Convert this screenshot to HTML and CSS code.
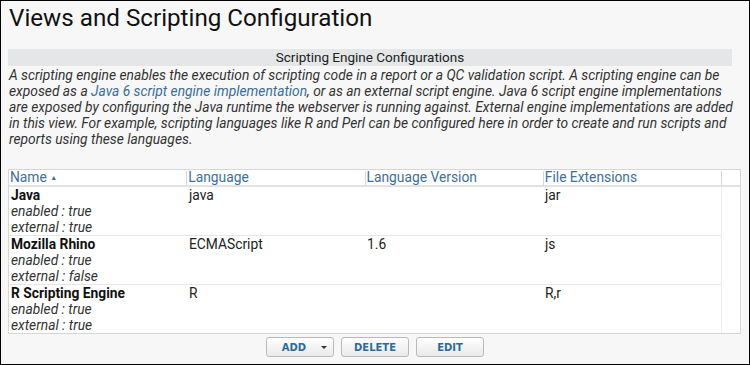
FILE: index.html
```html
<!DOCTYPE html>
<html lang="en">
<head>
    <meta charset="UTF-8">
    <title>Views and Scripting Configuration</title>
    <link rel="stylesheet" href="styles.css">
</head>
<body>
    <div class="page">
        <h1>Views and Scripting Configuration</h1>

        <div class="section-title">Scripting Engine Configurations</div>
        <p class="intro">
            A scripting engine enables the execution of scripting code in a report or a QC validation script. A scripting engine can be<br>
            exposed as a <a href="#">Java 6 script engine implementation</a>, or as an external script engine. Java 6 script engine implementations<br>
            are exposed by configuring the Java runtime the webserver is running against. External engine implementations are added<br>
            in this view. For example, scripting languages like R and Perl can be configured here in order to create and run scripts and<br>
            reports using these languages.
        </p>

        <div class="grid">
            <div class="grid-head">
                <div class="col">Name <span class="sort">&#9650;</span></div>
                <div class="col">Language</div>
                <div class="col">Language Version</div>
                <div class="col">File Extensions</div>
                <div class="col filler"></div>
            </div>
            <div class="grid-body">
                <div class="rows">
                    <div class="row">
                        <div class="col">
                            <b>Java</b>
                            <i>enabled : true</i>
                            <i>external : true</i>
                        </div>
                        <div class="col">java</div>
                        <div class="col"></div>
                        <div class="col">jar</div>
                    </div>
                    <div class="row">
                        <div class="col">
                            <b>Mozilla Rhino</b>
                            <i>enabled : true</i>
                            <i>external : false</i>
                        </div>
                        <div class="col">ECMAScript</div>
                        <div class="col">1.6</div>
                        <div class="col">js</div>
                    </div>
                    <div class="row">
                        <div class="col">
                            <b>R Scripting Engine</b>
                            <i>enabled : true</i>
                            <i>external : true</i>
                        </div>
                        <div class="col">R</div>
                        <div class="col"></div>
                        <div class="col">R,r</div>
                    </div>
                </div>
                <div class="scrollbar"></div>
            </div>
        </div>

        <div class="toolbar">
            <button class="btn btn-add">ADD <span class="caret"></span></button>
            <button class="btn">DELETE</button>
            <button class="btn">EDIT</button>
        </div>
    </div>
</body>
</html>
```

FILE: styles.css
```css
html, body {
    margin: 0;
    padding: 0;
}
body {
    font-family: Roboto, "Liberation Sans", sans-serif;
    font-size: 13.8px;
    color: #222;
    background: #fff;
}
.page {
    width: 750px;
    height: 365px;
    box-sizing: border-box;
    border: 1px solid #000;
    background: #f7f7f7;
    padding: 3px 8px 0 7px;
    overflow: hidden;
}
h1 {
    margin: 0 0 0 1px;
    font-size: 24.2px;
    font-weight: 400;
    line-height: 28px;
    color: #111;
}
.section-title {
    margin-top: 17px;
    margin-right: 9px;
    background: #e4e6e8;
    text-align: center;
    font-size: 13.5px;
    line-height: 17px;
    color: #222;
}
.intro {
    margin: 1px 0 0 1px;
    font-style: italic;
    line-height: 16px;
    color: #333;
    white-space: nowrap;
}
.intro a {
    color: #3a6d9b;
    text-decoration: none;
}
.grid {
    margin-top: 22px;
    width: 731px;
    border: 1px solid #d6d6d6;
    background: #fff;
}
.grid-head {
    display: flex;
    border-bottom: 2px solid #e2e2e2;
    line-height: 13px;
    padding-top: 1px;
}
.grid-head .col {
    width: 177px;
    color: #3b6fa0;
    border-right: 1px solid #d6d6d6;
    padding-left: 1px;
}
.grid-head .col.filler {
    width: 17px;
    border-right: none;
}
.sort {
    font-size: 7px;
    vertical-align: 2px;
}
.grid-body {
    display: flex;
}
.rows {
    width: 712px;
    border-right: 1px solid #ececec;
}
.row {
    display: flex;
    border-bottom: 1px solid #e6e6e6;
}
.row:last-child {
    border-bottom: none;
}
.row .col {
    width: 178px;
    padding-left: 2px;
    line-height: 16px;
    color: #222;
}
.row .col b,
.row .col i {
    display: block;
}
.row .col b {
    color: #111;
}
.row .col i {
    color: #333;
}
.scrollbar {
    flex: 1;
    background: #fff;
}
.toolbar {
    display: flex;
    justify-content: center;
    gap: 7px;
    margin-top: 3px;
    padding-left: 1px;
}
.btn {
    font-family: "DejaVu Sans", Verdana, sans-serif;
    font-size: 10px;
    font-weight: bold;
    color: #2c6a9e;
    height: 20px;
    width: 68px;
    padding: 0;
    border: 1px solid #b9b9b9;
    border-radius: 3px;
    background: linear-gradient(#ffffff, #e9e9e9);
}
.btn-add {
    position: relative;
    padding-right: 12px;
}
.caret {
    position: absolute;
    right: 6px;
    top: 8px;
    border-left: 3px solid transparent;
    border-right: 3px solid transparent;
    border-top: 3px solid #333;
}
```
